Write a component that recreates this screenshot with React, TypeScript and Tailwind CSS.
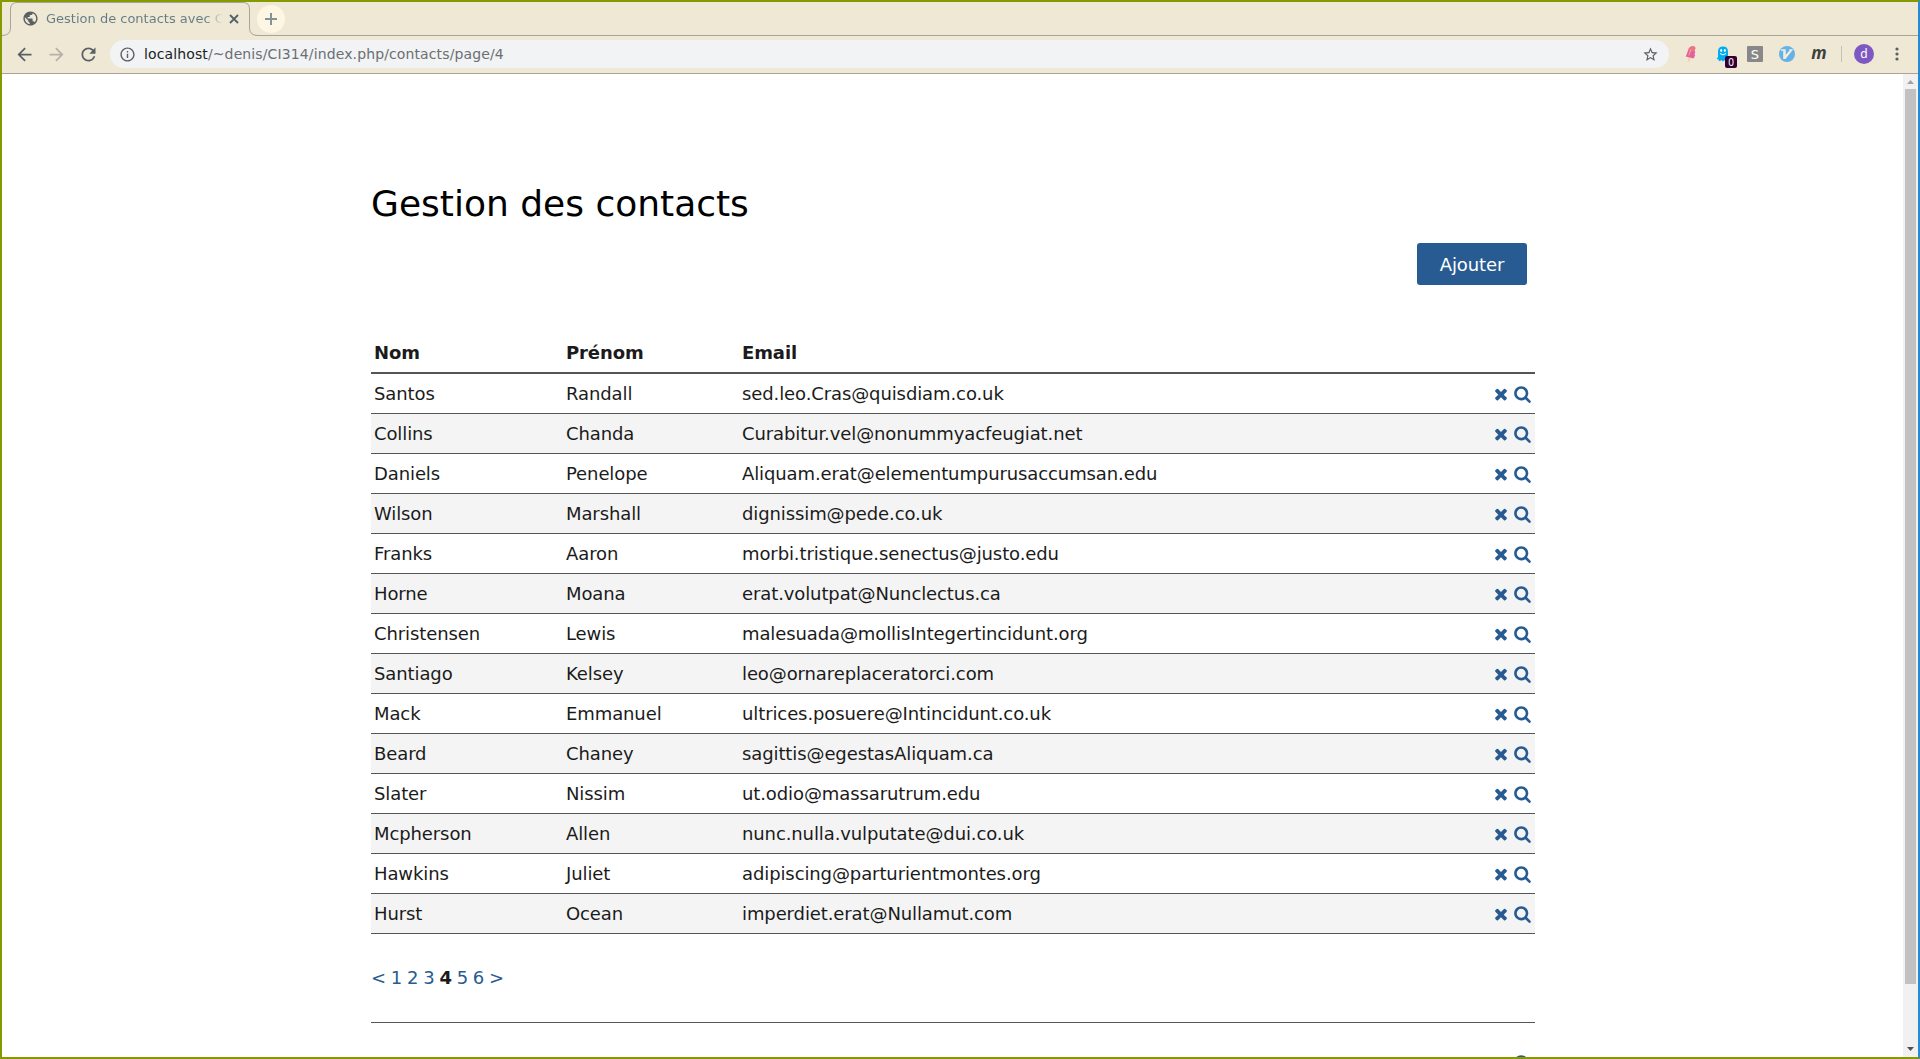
import { MdRefresh, MdArrowBack, MdArrowForward, MdInfoOutline, MdStarBorder, MdPublic } from "react-icons/md";

const contacts: [string, string, string][] = [
  ["Santos", "Randall", "sed.leo.Cras@quisdiam.co.uk"],
  ["Collins", "Chanda", "Curabitur.vel@nonummyacfeugiat.net"],
  ["Daniels", "Penelope", "Aliquam.erat@elementumpurusaccumsan.edu"],
  ["Wilson", "Marshall", "dignissim@pede.co.uk"],
  ["Franks", "Aaron", "morbi.tristique.senectus@justo.edu"],
  ["Horne", "Moana", "erat.volutpat@Nunclectus.ca"],
  ["Christensen", "Lewis", "malesuada@mollisIntegertincidunt.org"],
  ["Santiago", "Kelsey", "leo@ornareplaceratorci.com"],
  ["Mack", "Emmanuel", "ultrices.posuere@Intincidunt.co.uk"],
  ["Beard", "Chaney", "sagittis@egestasAliquam.ca"],
  ["Slater", "Nissim", "ut.odio@massarutrum.edu"],
  ["Mcpherson", "Allen", "nunc.nulla.vulputate@dui.co.uk"],
  ["Hawkins", "Juliet", "adipiscing@parturientmontes.org"],
  ["Hurst", "Ocean", "imperdiet.erat@Nullamut.com"],
];

function Times() {
  return (
    <svg width="14" height="18" viewBox="0 0 1408 1792" fill="currentColor" className="shrink-0">
      <path d="M1298 1322q0 40-28 68l-136 136q-28 28-68 28t-68-28l-294-294-294 294q-28 28-68 28t-68-28l-136-136q-28-28-28-68t28-68l294-294-294-294q-28-28-28-68t28-68l136-136q28-28 68-28t68 28l294 294 294-294q28-28 68-28t68 28l136 136q28 28 28 68t-28 68l-294 294 294 294q28 28 28 68z" />
    </svg>
  );
}

function Search() {
  return (
    <svg width="17" height="18" viewBox="0 0 1664 1792" fill="currentColor" className="shrink-0">
      <path d="M1152 832q0-185-131.500-316.500t-316.500-131.500-316.500 131.500-131.500 316.500 131.500 316.500 316.500 131.500 316.500-131.500 131.500-316.500zm512 832q0 52-38 90t-90 38q-54 0-90-38l-343-342q-179 124-399 124-143 0-273.500-55.500t-225-150-150-225-55.500-273.500 55.500-273.500 150-225 225-150 273.500-55.500 273.500 55.500 225 150 150 225 55.500 273.500q0 220-124 399l343 343q37 37 37 90z" />
    </svg>
  );
}

function TabStrip() {
  return (
    <div className="relative flex h-[34px] shrink-0 items-center border-b border-[#a9a498]">
      <svg className="absolute left-0 top-0" width="256" height="34" viewBox="0 0 256 34" fill="none">
        <path d="M0 33.500Q8.500 33.500 8.500 26V7Q8.500 0.500 15 .5H241Q247.500 0.500 247.500 7V26Q247.500 33.500 256 33.500V35H0Z" fill="#eee8d5" />
        <path d="M0 33.500Q8.500 33.500 8.500 26V7Q8.500 0.500 15 .5H241Q247.500 0.500 247.500 7V26Q247.500 33.500 256 33.500" stroke="#a9a498" />
      </svg>
      <div className="relative flex h-[34px] w-full items-center pl-5">
        <MdPublic className="size-[17px] text-[#5a6063]" />
        <span className="ml-[7px] w-[177px] whitespace-nowrap bg-gradient-to-r from-[#657b83] from-90% to-transparent bg-clip-text pt-px text-[13px] leading-5 text-transparent">Gestion de contacts avec C</span>
        <svg className="ml-[6px] mt-px" width="10" height="10" viewBox="0 0 10 10" stroke="#4f6468" strokeWidth="1.800"><path d="M1 1l8 8M9 1l-8 8" /></svg>
        <span className="ml-[18px] flex size-7 items-center justify-center rounded-full bg-[#fdf6e3]">
          <svg width="12" height="12" viewBox="0 0 12 12" stroke="#839496" strokeWidth="2"><path d="M6 0v12M0 6h12" /></svg>
        </span>
      </div>
    </div>
  );
}

function Extensions() {
  return (
    <>
      <svg className="ml-4" width="12" height="16" viewBox="0 0 12 16">
        <path d="M3.300 11l2.700.5-1.200 3.800q-.6.800-1.600.3-.6-.4-.3-1.200z" fill="#f8d3a4" />
        <path d="M.8 10.500L3.300 4Q4.500.4 7.500.3T10.300 2.600L9.400 4.500l.9 1.500-.8 2 .6 1.500L8.600 12.600z" fill="#e4609e" />
        <path d="M3.300 4Q4.500.4 7.500.3T10.300 2.600L9.400 4.500 6 6z" fill="#f0747e" />
        <path d="M5.800 3.500L3.800 9.500" stroke="#f4a3b8" />
      </svg>
      <span className="relative ml-[19px] block h-4 w-[14px]">
        <svg width="14" height="16" viewBox="0 0 14 16">
          <path d="M2 5.500Q2 .5 7 .5T12 5.500V11l1.300 2-2 .8-.8 1.500-2-1-1.500 1.200-1.500-1.300-2.500 1-.5-1.700L.7 13 2 11z" fill="#00aef0" />
          <ellipse cx="5.200" cy="4.500" rx="1" ry="1.400" fill="#fff" /><ellipse cx="8.800" cy="4.500" rx="1" ry="1.400" fill="#fff" />
          <path d="M4 7.500q3 2.800 6 0" stroke="#fff" fill="none" />
        </svg>
        <span className="absolute left-[9px] top-[10px] flex size-3 items-center justify-center rounded-[2px] bg-[#330033] text-[10px] leading-none text-white font-['Noto_Sans']">0</span>
      </span>
      <span className="ml-[17px] flex size-4 items-center justify-center rounded-[1px] bg-[#888] text-[13px] leading-none text-white">S</span>
      <svg className="ml-4" width="16" height="16" viewBox="0 0 16 16">
        <circle cx="8" cy="8" r="8" fill="#65b3e6" />
        <path d="M2 3.300h4.700v5.500l4-4.600-1-.9h4.500L6.500 13H4.200V4.800H2z" fill="#f1ede0" />
      </svg>
      <span className="ml-4 w-4 text-center text-[17px] font-bold italic leading-none text-[#3b4040] font-['Open_Sans']"><span className="relative -top-[2px]">m</span></span>
      <span className="ml-[14px] h-4 w-px bg-[#c5c1b3]" />
      <span className="ml-3 flex size-5 items-center justify-center rounded-full bg-[#7e57c2] text-[12px] leading-none text-white font-['Noto_Sans']">d</span>
      <svg className="ml-[21px]" width="4" height="14" viewBox="0 0 4 14" fill="#5a6063"><circle cx="2" cy="2" r="1.600" /><circle cx="2" cy="7" r="1.600" /><circle cx="2" cy="12" r="1.600" /></svg>
    </>
  );
}

function Toolbar() {
  return (
    <div className="flex h-[38px] shrink-0 items-center border-b border-[#a9a498] pb-px text-[#5a6063]">
      <MdArrowBack className="ml-3 size-[21px]" />
      <MdArrowForward className="ml-[11px] size-[21px] text-[#b5b2a7]" />
      <MdRefresh className="ml-[11px] size-[21px]" />
      <div className="ml-[11px] flex h-7 w-[1559px] shrink-0 items-center rounded-full bg-[#f1f3f4] pl-[9px] pr-[10px]">
        <MdInfoOutline className="size-[17px]" />
        <span className="ml-2 text-[14px] leading-5 tracking-[0.120px] text-[#6b6f73]"><span className="text-[#202124]">localhost</span>/~denis/CI314/index.php/contacts/page/4</span>
        <MdStarBorder className="ml-auto size-[17px]" />
      </div>
      <Extensions />
    </div>
  );
}

function ContactsTable() {
  return (
    <table className="mt-[48px] w-full table-fixed border-separate border-spacing-0 text-left">
      <colgroup>
        <col className="w-[192px]" />
        <col className="w-[176px]" />
        <col />
        <col className="w-[60px]" />
      </colgroup>
      <thead>
        <tr>
          {["Nom", "Prénom", "Email", ""].map((label) => (
            <th key={label} className="h-[41px] border-b-2 border-[#555] px-[3px] py-[6px] font-bold">{label}</th>
          ))}
        </tr>
      </thead>
      <tbody>
        {contacts.map(([name, firstName, email]) => (
          <tr key={name} className="even:bg-[#f4f4f4]">
            <td className="h-10 border-b border-[#555] px-[3px] py-[6px]">{name}</td>
            <td className="border-b border-[#555] px-[3px] py-[6px]">{firstName}</td>
            <td className="border-b border-[#555] px-[3px] py-[6px]">{email}</td>
            <td className="border-b border-[#555] pr-1">
              <div className="flex justify-end gap-[6px] pt-px text-[#275b91]">
                <Times />
                <Search />
              </div>
            </td>
          </tr>
        ))}
      </tbody>
    </table>
  );
}

function Pagination() {
  return (
    <nav className="mt-[30px] text-[#275b91] [word-spacing:-0.8px]">
      <a>&lt;</a> <a>1</a> <a>2</a> <a>3</a> <strong className="text-[#1b1b1b]">4</strong> <a>5</a> <a>6</a> <a>&gt;</a>
    </nav>
  );
}

function Scrollbar() {
  return (
    <div className="flex w-[15px] shrink-0 flex-col items-center bg-[#f1f1f1]">
      <svg className="mt-[6px] shrink-0" width="7" height="4" viewBox="0 0 7 4" fill="#a3a3a3"><path d="M0 4L3.500 0 7 4z" /></svg>
      <div className="mt-[5px] h-[895px] w-[11px] shrink-0 bg-[#c1c1c1]" />
      <svg className="mb-[6px] mt-auto shrink-0" width="7" height="4" viewBox="0 0 7 4" fill="#505050"><path d="M0 0L3.500 4 7 0z" /></svg>
    </div>
  );
}

export default function App() {
  return (
    <div className="flex h-[1059px] w-[1920px] flex-col overflow-hidden border-2 border-[#859900] border-r-[#268bd2] bg-[#eee8d5] font-['DejaVu_Sans',sans-serif]">
      <TabStrip />
      <Toolbar />
      <div className="flex min-h-0 flex-1 bg-white">
        <main className="h-full w-[1901px] overflow-hidden pl-[369px] text-[18px] leading-[27px] tracking-[-0.105px] text-[#1b1b1b]">
          <div className="w-[1164px]">
            <h1 className="pt-[103px] text-[36px] leading-[54px] tracking-normal text-black">Gestion des contacts</h1>
            <div className="mt-[12px] flex justify-end pr-2">
              <button className="h-[42px] w-[110px] rounded-[3px] bg-[#275b91] text-white">Ajouter</button>
            </div>
            <ContactsTable />
            <Pagination />
            <hr className="mt-[31px] border-[#555]" />
            <div className="mt-[31px] flex justify-end pr-1 text-[#275b91]">
              <Search />
            </div>
          </div>
        </main>
        <Scrollbar />
      </div>
    </div>
  );
}
